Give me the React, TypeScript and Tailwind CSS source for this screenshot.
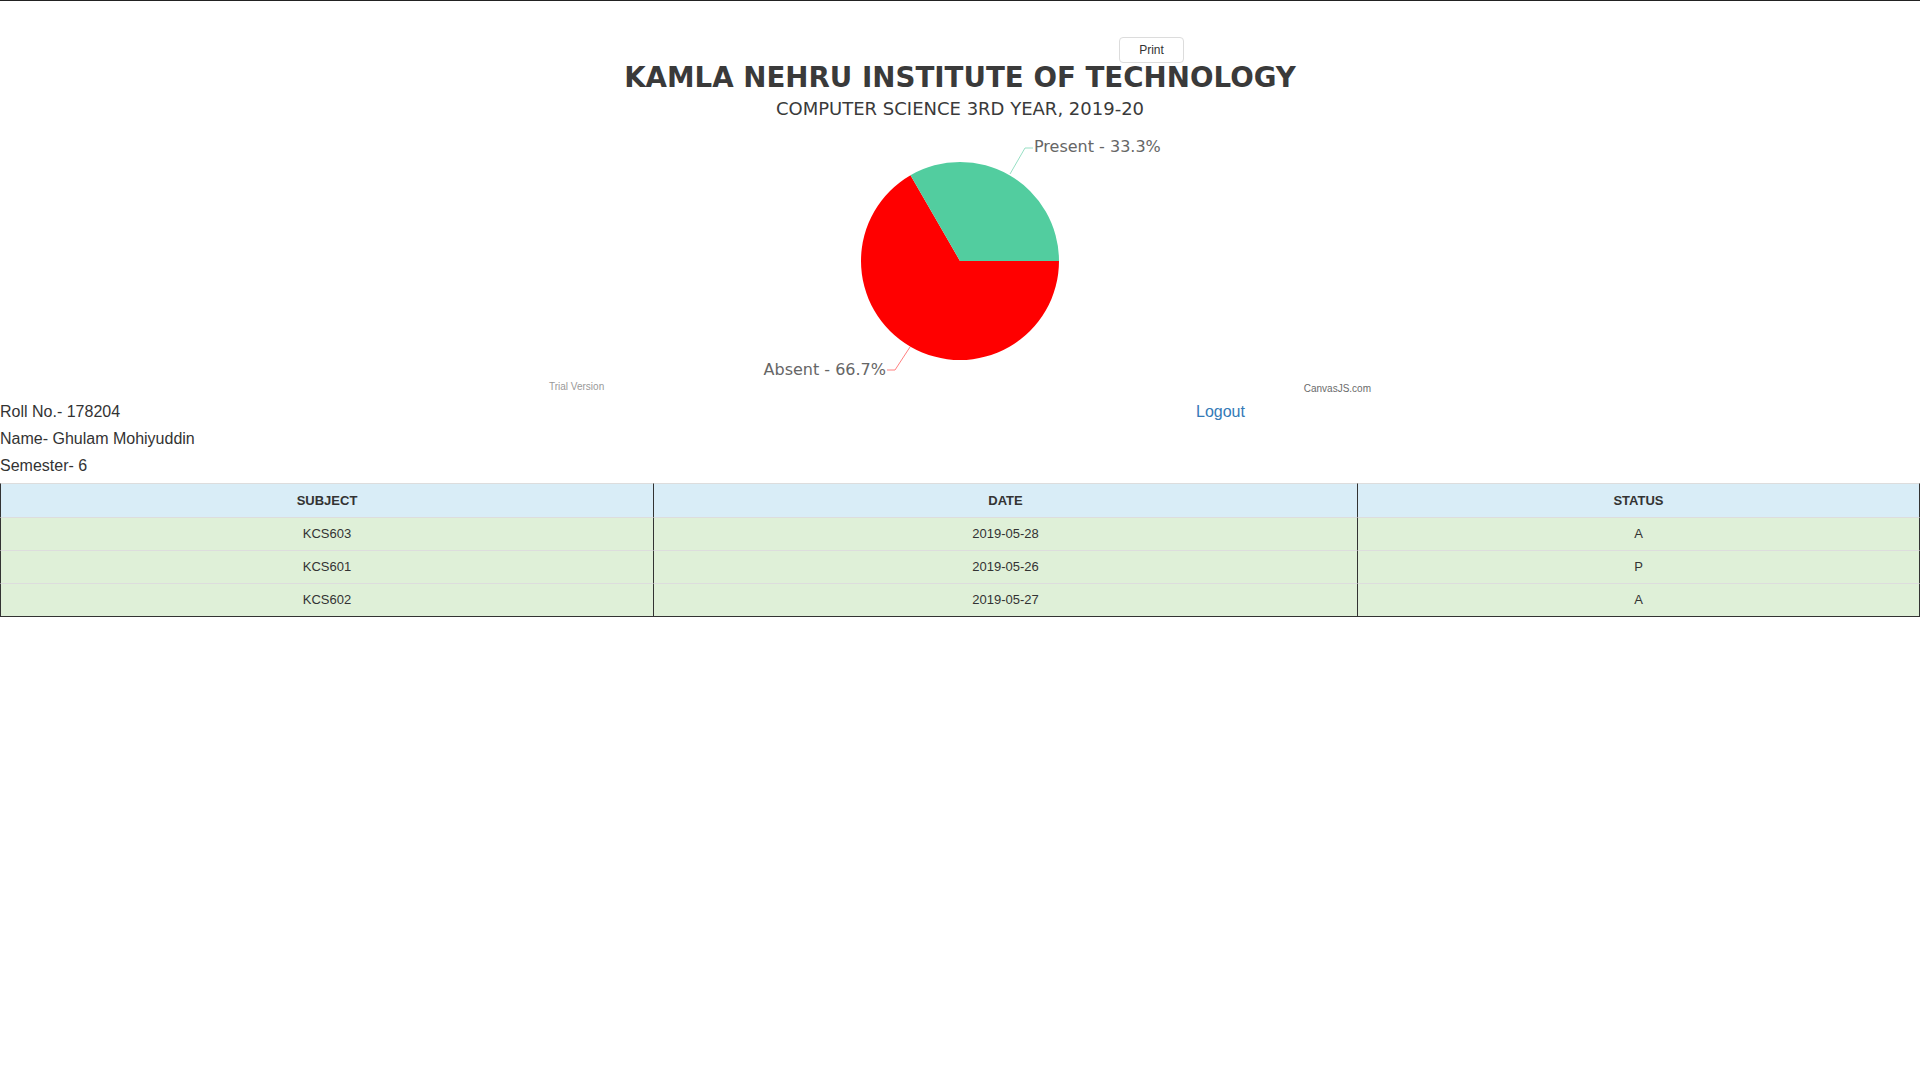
import React from 'react';

const rows = [
  { subject: 'KCS603', date: '2019-05-28', status: 'A' },
  { subject: 'KCS601', date: '2019-05-26', status: 'P' },
  { subject: 'KCS602', date: '2019-05-27', status: 'A' },
];

// pie: center (411,143), r 99 inside the svg
const AttendancePie = () => (
  <svg width="822" height="261" viewBox="0 0 822 261" className="block">
    <path d="M411,143 L510,143 A99,99 0 1,1 361.5,57.26 Z" fill="#ff0000" />
    <path d="M411,143 L361.5,57.26 A99,99 0 0,1 510,143 Z" fill="#52cd9f" />
    <polyline points="461,56 476,30 484,30" fill="none" stroke="#97dfc4" strokeWidth="1" />
    <polyline points="361,229 346,252 338,252" fill="none" stroke="#ff8080" strokeWidth="1" />
    <text x="485" y="33.5" fontFamily="'DejaVu Sans', sans-serif" fontSize="16" fill="#666666">
      Present - 33.3%
    </text>
    <text x="337" y="256.5" textAnchor="end" fontFamily="'DejaVu Sans', sans-serif" fontSize="16" fill="#666666">
      Absent - 66.7%
    </text>
  </svg>
);

export default function App() {
  return (
    <div className="relative min-h-screen w-full bg-white border-t border-[#222] font-['Liberation_Sans',Arial,sans-serif] text-[#333]">
      {/* Print button sits over the chart */}
      <button className="absolute left-[1119px] top-[36px] w-[65px] h-[26px] rounded-[4px] border border-[#dcdcdc] bg-white text-[12px] text-[#333] leading-none">
        Print
      </button>

      {/* Chart */}
      <div className="mx-auto w-[822px] h-[397px] flex flex-col items-center font-['DejaVu_Sans',Verdana,sans-serif]">
        <h1 className="mt-[63px] text-[27.7px] leading-[28px] font-bold text-[#3a3a3a] whitespace-nowrap">
          KAMLA NEHRU INSTITUTE OF TECHNOLOGY
        </h1>
        <h2 className="mt-2 text-[18px] leading-[18px] text-[#3a3a3a] whitespace-nowrap">
          COMPUTER SCIENCE 3RD YEAR, 2019-20
        </h2>
        <AttendancePie />
        <div className="w-full flex justify-between font-['Liberation_Sans',Arial,sans-serif]">
          <span className="mt-[2px] text-[10px] leading-[12px] text-[#999]">Trial Version</span>
          <span className="mt-[4px] text-[10px] leading-[12px] text-[#6b6b6b]">CanvasJS.com</span>
        </div>
      </div>

      {/* Student info */}
      <div className="grid grid-cols-[1196px_1fr] text-[16px] leading-[27px]">
        <div>
          <div>Roll No.- 178204</div>
          <div>Name- Ghulam Mohiyuddin</div>
          <div>Semester- 6</div>
        </div>
        <div>
          <a className="text-[#337ab7]">Logout</a>
        </div>
      </div>

      {/* Attendance table */}
      <table className="mt-1 w-full border-separate border-spacing-0 text-[13px] text-[#333]">
        <thead>
          <tr className="bg-[#d9edf7]">
            <th className="w-[653px] h-[35px] border-t border-b border-t-[#ddd] border-b-[#ddd] border-l border-l-[#333] font-bold">SUBJECT</th>
            <th className="w-[704px] h-[35px] border-t border-b border-t-[#ddd] border-b-[#ddd] border-l border-l-[#333] font-bold">DATE</th>
            <th className="h-[35px] border-t border-b border-t-[#ddd] border-b-[#ddd] border-l border-l-[#333] border-r border-r-[#333] font-bold">STATUS</th>
          </tr>
        </thead>
        <tbody>
          {rows.map((r, i) => {
            const last = i === rows.length - 1;
            const bottom = last ? 'border-b border-b-[#333]' : 'border-b border-b-[#ddd]';
            return (
              <tr key={r.subject} className="bg-[#dff0d8]">
                <td className={`h-[33px] text-center border-l border-l-[#333] ${bottom}`}>{r.subject}</td>
                <td className={`h-[33px] text-center border-l border-l-[#333] ${bottom}`}>{r.date}</td>
                <td className={`h-[33px] text-center border-l border-l-[#333] border-r border-r-[#333] ${bottom}`}>{r.status}</td>
              </tr>
            );
          })}
        </tbody>
      </table>
    </div>
  );
}
